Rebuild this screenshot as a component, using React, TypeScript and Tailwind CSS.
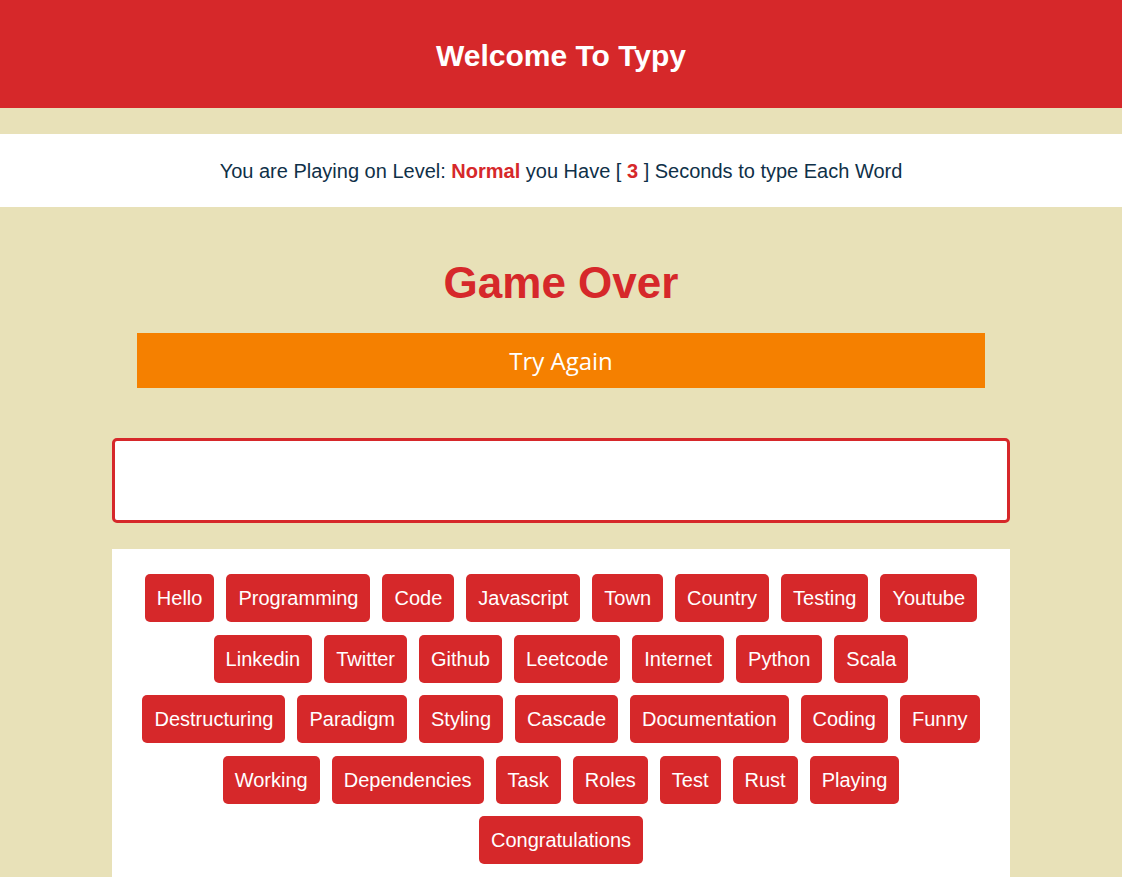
const WORDS = [
  'Hello', 'Programming', 'Code', 'Javascript', 'Town', 'Country', 'Testing', 'Youtube',
  'Linkedin', 'Twitter', 'Github', 'Leetcode', 'Internet', 'Python', 'Scala',
  'Destructuring', 'Paradigm', 'Styling', 'Cascade', 'Documentation', 'Coding', 'Funny',
  'Working', 'Dependencies', 'Task', 'Roles', 'Test', 'Rust', 'Playing',
  'Congratulations',
];

export default function App() {
  return (
    <div className="min-h-[877px] bg-[#e8e1b8] font-['Liberation_Sans',Arial,sans-serif]">
      <header className="h-[108px] pt-[3px] bg-[#d6282a] flex items-center justify-center">
        <h1 className="text-[30px] font-bold text-white">Welcome To Typy</h1>
      </header>

      <div className="mt-[26px] h-[73px] bg-white flex items-center justify-center text-[20px] text-[#0f3048]">
        <p>
          You are Playing on Level: <span className="font-bold text-[#d6282a]">Normal</span> you Have [{' '}
          <span className="font-bold text-[#d6282a]">3</span> ] Seconds to type Each Word
        </p>
      </div>

      <div className="w-[898px] mx-auto flex flex-col items-center">
        <h2 className="mt-[49px] h-[54px] leading-[54px] text-[44px] font-bold text-[#d6282a]">Game Over</h2>

        <button className="mt-[23px] w-[848px] h-[55px] bg-[#f58000] text-white text-[24px] font-['Open_Sans',sans-serif]">
          Try Again
        </button>

        <input
          className="mt-[50px] w-full h-[85px] bg-white border-[3px] border-[#d6282a] rounded-[5px] outline-none"
          type="text"
        />

        <div className="mt-[26px] w-full bg-white px-[25px] pt-[25px] pb-[20px] flex flex-wrap justify-center gap-x-3 gap-y-[12.5px]">
          {WORDS.map((w) => (
            <span
              key={w}
              className="h-[48px] px-3 flex items-center bg-[#d6282a] text-white text-[20px] rounded-[5px]"
            >
              {w}
            </span>
          ))}
        </div>
      </div>
    </div>
  );
}
